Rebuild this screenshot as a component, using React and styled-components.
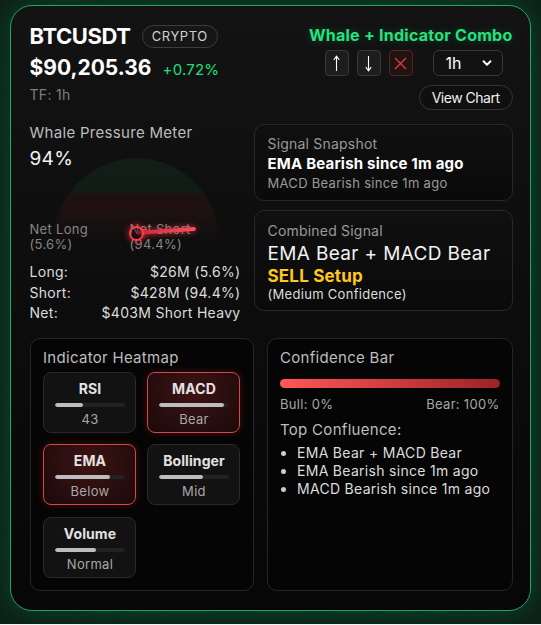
import React from "react";
import styled, { createGlobalStyle } from "styled-components";
import { ChevronDown } from "lucide-react";

const Global = createGlobalStyle`
  html, body { margin: 0; padding: 0; background: #f4f4f4; }
  body { font-family: Inter, "Noto Sans", sans-serif; }
  * { box-sizing: border-box; }
`;

const Page = styled.div`
  height: 624px;
  padding: 5px 10px 0;
  background: radial-gradient(ellipse at 50% 50%, #0b2e20 0%, #0a261b 60%, #0c2119 100%);
`;

const Card = styled.div`
  height: 606px;
  border: 1.5px solid #1fa463;
  border-radius: 22px;
  background: linear-gradient(180deg, #131313 0%, #0c0c0c 55%, #070707 100%);
  box-shadow: 0 0 24px rgba(16, 190, 100, 0.22);
  padding: 17px 17.5px 20px 18.5px;
  display: flex;
  flex-direction: column;
  gap: 14px;
  color: #e6e6e6;
  letter-spacing: 0.3px;
`;

const Header = styled.div`
  display: flex;
  justify-content: space-between;
  align-items: flex-start;
`;

const HeadLeft = styled.div`
  display: flex;
  flex-direction: column;
`;

const Row = styled.div`
  display: flex;
  align-items: center;
  gap: ${(p) => p.$gap || 10}px;
`;

const Symbol = styled.div`
  font-size: 22px;
  font-weight: 700;
  color: #fff;
  line-height: 26px;
  letter-spacing: -0.4px;
`;

const Pill = styled.span`
  border: 1px solid #3d3d3d;
  border-radius: 12px;
  padding: 0 9px;
  height: 23px;
  display: inline-flex;
  align-items: center;
  font-size: 13px;
  letter-spacing: 0.6px;
  color: #d0d0d0;
  background: #161616;
`;

const Price = styled.div`
  font-size: 21px;
  font-weight: 700;
  color: #fff;
  line-height: 26px;
  margin-top: 6px;
  letter-spacing: 0;
`;

const Change = styled.span`
  color: #1fe07a;
  font-size: 15px;
  margin-top: 8px;
  letter-spacing: 0.2px;
`;

const TF = styled.div`
  color: #7d7d7d;
  font-size: 14px;
  line-height: 16px;
  margin-top: 6px;
`;

const HeadRight = styled.div`
  display: flex;
  flex-direction: column;
  align-items: flex-end;
`;

const Brand = styled.div`
  color: #22e37f;
  font-size: 16px;
  font-weight: 700;
  line-height: 20px;
  margin-top: 2px;
  letter-spacing: 0.25px;
  text-shadow: 0 0 8px rgba(34, 227, 127, 0.25);
`;

const Controls = styled.div`
  display: flex;
  align-items: center;
  margin-top: 5px;
  margin-right: 10px;
`;

const IconBtn = styled.div`
  width: 24px;
  height: 26px;
  border-radius: 4px;
  border: 1px solid ${(p) => (p.$danger ? "#5c2222" : "#383838")};
  background: ${(p) => (p.$danger ? "#1f1313" : "#1d1d1d")};
  display: flex;
  align-items: center;
  justify-content: center;
  margin-right: 8px;
`;

const Select = styled.div`
  width: 70px;
  height: 26px;
  margin-left: 12px;
  border: 1px solid #383838;
  border-radius: 6px;
  background: #121212;
  display: flex;
  align-items: center;
  justify-content: space-between;
  padding: 0 8px 0 12px;
  font-size: 16px;
  color: #fff;
  letter-spacing: 0;
`;

const ViewChart = styled.div`
  margin-top: 9px;
  height: 25px;
  padding: 0 12px;
  border: 1px solid #353535;
  border-radius: 13px;
  background: #0f0f0f;
  display: flex;
  align-items: center;
  font-size: 14px;
  color: #f0f0f0;
  letter-spacing: -0.5px;
`;

const Middle = styled.div`
  display: grid;
  grid-template-columns: 211px 1fr;
  column-gap: 13px;
`;

const LeftCol = styled.div`
  display: flex;
  flex-direction: column;
`;

const SectionTitle = styled.div`
  font-size: 15px;
  line-height: 18px;
  color: #bdbdbd;
  margin-top: ${(p) => p.$mt || 0}px;
`;

const BigPct = styled.div`
  font-size: 19px;
  line-height: 24px;
  color: #f2f2f2;
  margin-top: 5px;
`;

const Meter = styled.div`
  position: relative;
  height: 51px;
`;

const Arc = styled.div`
  position: absolute;
  left: 23px;
  top: -13px;
  width: 167px;
  height: 86px;
  border-radius: 50% 50% 0 0 / 100% 100% 0 0;
  background: linear-gradient(
    180deg,
    rgba(30, 120, 70, 0.14) 0%,
    rgba(30, 120, 70, 0.12) 41%,
    rgba(110, 30, 30, 0.18) 41%,
    rgba(110, 30, 30, 0.15) 100%
  );
  -webkit-mask-image: linear-gradient(180deg, #000 62%, transparent 100%);
  mask-image: linear-gradient(180deg, #000 62%, transparent 100%);
`;

const Needle = styled.div`
  position: absolute;
  left: 107px;
  top: 62px;
  width: 59px;
  height: 4px;
  margin-top: -2px;
  border-radius: 2px;
  background: linear-gradient(90deg, #c8283a, #ff4e5c);
  box-shadow: 0 0 6px rgba(255, 60, 80, 0.8);
  transform-origin: 0 50%;
  transform: rotate(${(p) => p.$angle}deg);
  z-index: 2;
`;

const Pivot = styled.div`
  position: absolute;
  left: 99px;
  top: 55px;
  width: 15px;
  height: 15px;
  border-radius: 50%;
  border: 2px solid #ff3b4c;
  background: rgba(20, 10, 10, 0.4);
  box-shadow: 0 0 7px rgba(255, 50, 70, 0.8);
  z-index: 3;
`;

const Labels = styled.div`
  display: grid;
  grid-template-columns: 100px 100px;
  font-size: 13px;
  line-height: 15px;
  color: #858585;
  position: relative;
`;

const Stats = styled.div`
  margin-top: 10px;
  display: flex;
  flex-direction: column;
`;

const StatRow = styled.div`
  display: flex;
  justify-content: space-between;
  font-size: 14px;
  line-height: 20.5px;
  color: #dcdcdc;
`;

const RightCol = styled.div`
  display: flex;
  flex-direction: column;
  gap: 9px;
`;

const Panel = styled.div`
  border: 1px solid #282828;
  border-radius: 10px;
  background: linear-gradient(180deg, #101010, #0a0a0a);
  padding: ${(p) => p.$pad || "9px 13px 8px"};
`;

const Line = styled.div`
  font-size: ${(p) => p.$size || 14}px;
  line-height: ${(p) => p.$lh || 19}px;
  color: ${(p) => p.$color || "#9a9a9a"};
  font-weight: ${(p) => p.$weight || 400};
  letter-spacing: ${(p) => p.$ls ?? 0.3}px;
`;

const Bottom = styled.div`
  display: grid;
  grid-template-columns: 224px 1fr;
  column-gap: 13px;
  height: 252px;
`;

const DarkPanel = styled.div`
  border: 1px solid #262626;
  border-radius: 10px;
  background: #050505;
  padding: 10px 12px 12px 12.5px;
  display: flex;
  flex-direction: column;
`;

const Tiles = styled.div`
  display: grid;
  grid-template-columns: 93px 93px;
  grid-auto-rows: 61px;
  gap: 11.5px 11px;
  margin-top: 5px;
`;

const Tile = styled.div`
  border-radius: 8px;
  border: 1px solid ${(p) => (p.$hot ? "#d9434a" : "#292929")};
  background: ${(p) =>
    p.$hot
      ? "radial-gradient(ellipse at 50% 30%, #3e1313 0%, #2a0e0e 55%, #1c0909 100%)"
      : "#121212"};
  box-shadow: ${(p) => (p.$hot ? "0 0 8px rgba(220, 50, 50, 0.25)" : "none")};
  padding: 7px 10px 0 11px;
  display: flex;
  flex-direction: column;
  align-items: center;
`;

const TileName = styled.div`
  font-size: 14px;
  font-weight: 700;
  line-height: 18px;
  color: #e2e2e2;
  letter-spacing: 0.1px;
`;

const TileTrack = styled.div`
  width: 100%;
  height: 4px;
  border-radius: 2px;
  background: #222;
  margin-top: 5px;
  overflow: hidden;
`;

const TileFill = styled.div`
  height: 100%;
  border-radius: 2px;
  background: #bdbdbd;
`;

const TileValue = styled.div`
  font-size: 13px;
  line-height: 17px;
  color: #a8a8a8;
  margin-top: 4px;
`;

const ConfBar = styled.div`
  height: 9px;
  border-radius: 5px;
  margin-top: 12px;
  background: linear-gradient(90deg, #ff5757 0%, #d03d40 50%, #9c2226 100%);
`;

const Split = styled.div`
  display: flex;
  justify-content: space-between;
  font-size: 13px;
  line-height: 17px;
  color: #a6a6a6;
  margin-top: 8px;
`;

const List = styled.ul`
  margin: 5px 0 0;
  padding-left: 17px;
  font-size: 14px;
  line-height: 18px;
  color: #dcdcdc;
  li::marker { color: #ccc; }
`;

const ArrowIcon = ({ down }) => (
  <svg width="9" height="17" viewBox="0 0 9 17" fill="none" stroke="#fff" strokeWidth="1.1">
    {down ? (
      <>
        <path d="M4.5 1 V15.5" />
        <path d="M1.8 12.2 L4.5 15.8 L7.2 12.2" />
      </>
    ) : (
      <>
        <path d="M4.5 1.5 V16" />
        <path d="M1.8 4.8 L4.5 1.2 L7.2 4.8" />
      </>
    )}
  </svg>
);

const CloseIcon = () => (
  <svg width="13" height="13" viewBox="0 0 13 13" stroke="#e5393b" strokeWidth="1.4">
    <path d="M1 1 L12 12 M12 1 L1 12" />
  </svg>
);

const tiles = [
  { name: "RSI", value: "43", fill: 40 },
  { name: "MACD", value: "Bear", fill: 93, hot: true },
  { name: "EMA", value: "Below", fill: 79, hot: true },
  { name: "Bollinger", value: "Mid", fill: 63 },
  { name: "Volume", value: "Normal", fill: 58 },
];

export default function App() {
  return (
    <>
      <Global />
      <Page>
        <Card>
          <Header>
            <HeadLeft>
              <Row $gap={11}>
                <Symbol>BTCUSDT</Symbol>
                <Pill>CRYPTO</Pill>
              </Row>
              <Row $gap={11}>
                <Price>$90,205.36</Price>
                <Change>+0.72%</Change>
              </Row>
              <TF>TF: 1h</TF>
            </HeadLeft>
            <HeadRight>
              <Brand>Whale + Indicator Combo</Brand>
              <Controls>
                <IconBtn>
                  <ArrowIcon />
                </IconBtn>
                <IconBtn>
                  <ArrowIcon down />
                </IconBtn>
                <IconBtn $danger>
                  <CloseIcon />
                </IconBtn>
                <Select>
                  <span>1h</span>
                  <ChevronDown size={14} strokeWidth={3.2} color="#fff" />
                </Select>
              </Controls>
              <ViewChart>View Chart</ViewChart>
            </HeadRight>
          </Header>

          <Middle>
            <LeftCol>
              <SectionTitle>Whale Pressure Meter</SectionTitle>
              <BigPct>94%</BigPct>
              <Meter>
                <Arc />
                <Needle $angle={-4} />
                <Pivot />
              </Meter>
              <Labels>
                <div>
                  Net Long
                  <br />
                  (5.6%)
                </div>
                <div>
                  Net Short
                  <br />
                  (94.4%)
                </div>
              </Labels>
              <Stats>
                <StatRow>
                  <span>Long:</span>
                  <span>$26M (5.6%)</span>
                </StatRow>
                <StatRow>
                  <span>Short:</span>
                  <span>$428M (94.4%)</span>
                </StatRow>
                <StatRow>
                  <span>Net:</span>
                  <span>$403M Short Heavy</span>
                </StatRow>
              </Stats>
            </LeftCol>
            <RightCol>
              <Panel>
                <Line $ls={0.2}>Signal Snapshot</Line>
                <Line $size={15} $lh={21} $color="#fff" $weight={700} $ls={0.2}>
                  EMA Bearish since 1m ago
                </Line>
                <Line $size={13} $lh={18}>
                  MACD Bearish since 1m ago
                </Line>
              </Panel>
              <Panel $pad="10px 13px 7px">
                <Line $ls={0.2}>Combined Signal</Line>
                <Line $size={19} $lh={27} $color="#f2f2f2" $ls={0.35}>
                  EMA Bear + MACD Bear
                </Line>
                <Line $size={17} $lh={19} $color="#ffc81a" $weight={700} $ls={0.2}>
                  SELL Setup
                </Line>
                <Line $size={13} $lh={17} $color="#dddddd">
                  (Medium Confidence)
                </Line>
              </Panel>
            </RightCol>
          </Middle>

          <Bottom>
            <DarkPanel>
              <SectionTitle>Indicator Heatmap</SectionTitle>
              <Tiles>
                {tiles.map((t) => (
                  <Tile key={t.name} $hot={t.hot}>
                    <TileName>{t.name}</TileName>
                    <TileTrack>
                      <TileFill style={{ width: `${t.fill}%` }} />
                    </TileTrack>
                    <TileValue>{t.value}</TileValue>
                  </Tile>
                ))}
              </Tiles>
            </DarkPanel>
            <DarkPanel>
              <SectionTitle>Confidence Bar</SectionTitle>
              <ConfBar />
              <Split>
                <span>Bull: 0%</span>
                <span>Bear: 100%</span>
              </Split>
              <SectionTitle $mt={8}>Top Confluence:</SectionTitle>
              <List>
                <li>EMA Bear + MACD Bear</li>
                <li>EMA Bearish since 1m ago</li>
                <li>MACD Bearish since 1m ago</li>
              </List>
            </DarkPanel>
          </Bottom>
        </Card>
      </Page>
    </>
  );
}
